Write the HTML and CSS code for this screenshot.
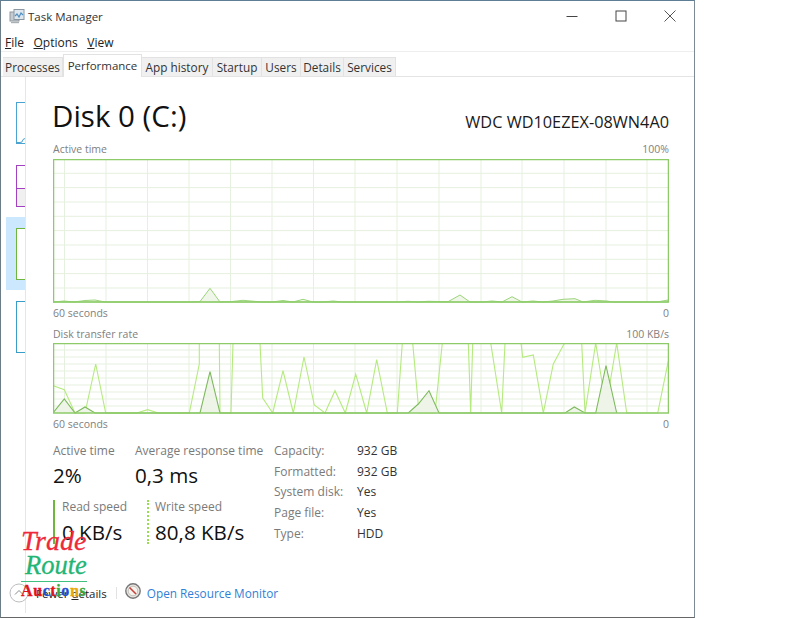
FILE: index.html
```html
<!DOCTYPE html>
<html lang="en">
<head>
<meta charset="utf-8">
<title>Task Manager</title>
<link rel="stylesheet" href="styles.css">
</head>
<body>
<div class="window">
  <header class="titlebar">
    <svg class="app-icon" viewBox="0 0 16 16" width="16" height="16">
      <rect x="1" y="4" width="9" height="9" fill="#c4ccd2" stroke="#8f979d" stroke-width="1"/>
      <rect x="5" y="1.5" width="10" height="10" fill="#dfe7ee" stroke="#8b98a3" stroke-width="1"/>
      <path d="M6 8l2-2 2 3 2-4 2 2" fill="none" stroke="#4f8fc4" stroke-width="1.2"/>
      <path d="M2 14.5h8" stroke="#a9b0b5" stroke-width="1.4"/>
    </svg>
    <span class="app-title">Task Manager</span>
    <div class="win-controls">
      <svg viewBox="0 0 12 12" width="12" height="12"><path d="M0.5 6.5h11" stroke="#444" fill="none"/></svg>
      <svg viewBox="0 0 12 12" width="12" height="12"><rect x="1" y="1" width="10" height="10" stroke="#444" fill="none"/></svg>
      <svg viewBox="0 0 12 12" width="12" height="12"><path d="M0.5 0.5l11 11M11.5 0.5l-11 11" stroke="#555" fill="none"/></svg>
    </div>
  </header>
  <nav class="menubar">
    <span><u>F</u>ile</span><span><u>O</u>ptions</span><span><u>V</u>iew</span>
  </nav>
  <div class="tabs">
    <div class="tab">Processes</div>
    <div class="tab active">Performance</div>
    <div class="tab">App history</div>
    <div class="tab">Startup</div>
    <div class="tab">Users</div>
    <div class="tab">Details</div>
    <div class="tab">Services</div>
  </div>
  <div class="body">
    <aside class="sidebar">
      <div class="side-item"><div class="thumb thumb-blue">
        <svg class="thumb-spark" viewBox="0 0 8 6" width="8" height="6"><path d="M0 5.5H3L5 5L6 2.5L8 1.5" fill="none" stroke="#4aa3d0"/></svg>
      </div></div>
      <div class="side-item"><div class="thumb thumb-purple"></div></div>
      <div class="side-item selected"><div class="thumb thumb-green"></div></div>
      <div class="side-item"><div class="thumb thumb-teal"></div></div>
    </aside>
    <main class="main">
      <div class="head">
        <h1 class="disk-title">Disk 0 (C:)</h1>
        <div class="disk-model">WDC WD10EZEX-08WN4A0</div>
      </div>
      <div class="cap cap-top"><span>Active time</span><span>100%</span></div>
      <svg class="chart chart-a" viewBox="53 159 616 144" width="616" height="144">
        <path class="grid" d="M53 173.3H668M53 187.6H668M53 202H668M53 216.3H668M53 230.6H668M53 245H668M53 259.3H668M53 273.6H668M53 288H668M64.5 159V302M106 159V302M147.5 159V302M189 159V302M230.5 159V302M272 159V302M313.5 159V302M355 159V302M397 159V302M439 159V302M481 159V302M522 159V302M564 159V302M606 159V302M647 159V302"/>
        <path class="area-light" d="M53 302L64 301L74 302L85 300.5L95 300L105 302L190 302L200 301.5L210 288.3L220 302L232 301.5L243 300.3L262 302L272 302L283 300.5L293 302L303 299.3L313 302L323 302L333 301L343 302L398 302L408 301.3L418 302L428 301.3L448 301.7L460 295L470 302L482 302L492 301L502 302L512 296.7L522 302L533 301L543 302L553 301L563 299.3L575 298.7L583 302L595 300.3L607 301L613 302L657 302L668 300V302Z"/>
        <rect class="frame" x="53.5" y="159.5" width="615" height="142.5"/>
      </svg>
      <div class="cap cap-mid"><span>60 seconds</span><span>0</span></div>
      <div class="cap cap-second"><span>Disk transfer rate</span><span>100 KB/s</span></div>
      <svg class="chart chart-b" viewBox="53 344 616 71" width="616" height="71">
        <path class="grid" d="M53 351H668M53 358H668M53 365H668M53 372H668M53 379H668M53 386H668M53 393H668M53 400H668M53 407H668M64.5 344V414M106 344V414M147.5 344V414M189 344V414M230.5 344V414M272 344V414M313.5 344V414M355 344V414M397 344V414M439 344V414M481 344V414M522 344V414M564 344V414M606 344V414M647 344V414"/>
        <polyline class="write" points="53.3,386.7 64.3,390.7 75,414 85,414 95.7,365 105.7,414 136.7,414 147.7,410.7 158.3,414 189.3,414 199.3,365 199.3,344 219.3,344 220,414 231,414 233,344 260,344 262.7,399 272.7,414 283,371.7 293.3,414 304,358 314.3,406 325,414 335,391.7 345.3,414 355.7,375 366.7,414 376.7,360.7 387.3,414 397.3,414 402.3,344 412.7,344 419,414 435,414 442.3,344 468.3,344 470.7,414 472.7,344 490.7,344 501.7,414 505,344 521,344 522.7,358.3 533.3,356 543.3,414 553.3,365 564,345 565,344 581.7,344 585,414 595.7,344 606,408 616.7,344 626.7,414 657.7,414 668.3,362"/>
        <path class="read" d="M53 414L64.3 400L75 414L85 408L95 414H200L210 372.7L220 414H408.3L418.3 405L429 391.7L439 414H565L574.3 408L585 414H595.7L606 366.7L616.7 414"/>
        <rect class="frame frame-b" x="53.5" y="344.5" width="615" height="69.5"/>
      </svg>
      <div class="cap cap-bottom"><span>60 seconds</span><span>0</span></div>
      <section class="stats">
        <div class="stats-left">
          <div class="stat-row">
            <div class="stat stat-active"><div class="label">Active time</div><div class="value">2%</div></div>
            <div class="stat"><div class="label">Average response time</div><div class="value">0,3 ms</div></div>
          </div>
          <div class="stat-row speeds">
            <div class="stat speed speed-read"><div class="label">Read speed</div><div class="value">0 KB/s</div></div>
            <div class="stat speed speed-write"><div class="label">Write speed</div><div class="value">80,8 KB/s</div></div>
          </div>
        </div>
        <dl class="info">
          <dt>Capacity:</dt><dd>932 GB</dd>
          <dt>Formatted:</dt><dd>932 GB</dd>
          <dt>System disk:</dt><dd>Yes</dd>
          <dt>Page file:</dt><dd>Yes</dd>
          <dt>Type:</dt><dd>HDD</dd>
        </dl>
      </section>
    </main>
  </div>
  <footer class="footer">
    <svg class="less" viewBox="0 0 20 20" width="20" height="20">
      <circle cx="10" cy="10" r="9" fill="#fff" stroke="#bdbdbd"/>
      <path d="M6 11.5l4-4 4 4" fill="none" stroke="#8a8a8a"/>
    </svg>
    <span class="fewer">Fewer <u>d</u>etails</span>
    <span class="sep"></span>
    <svg class="gauge" viewBox="0 0 16 16" width="16" height="16">
      <circle cx="8" cy="8" r="7.2" fill="#e9e6e2" stroke="#777" stroke-width="1.4"/>
      <circle cx="8" cy="8" r="4.8" fill="#f6f3ee" stroke="#b7b2ab" stroke-width=".8"/>
      <path d="M4.5 4.5L11 11" stroke="#c8413a" stroke-width="1.6"/>
    </svg>
    <span class="link">Open Resource Monitor</span>
  </footer>
  <div class="watermark">
    <div class="wm-trade">Trade</div>
    <div class="wm-route">Route</div>
    <div class="wm-auctions"><span class="c-r">A</span><span class="c-r">u</span><span class="c-b">c</span><span class="c-r">t</span><span class="c-g">i</span><span class="c-b">o</span><span class="c-y">n</span><span class="c-g">s</span></div>
  </div>
</div>
</body>
</html>
```

FILE: styles.css
```css
* { box-sizing: border-box; }
html, body { margin: 0; padding: 0; background: #fff; }
body { width: 800px; height: 618px; overflow: hidden; font-family: "Open Sans", "Noto Sans", sans-serif; color: #1a1a1a; }

.window {
  position: relative;
  width: 695px;
  height: 618px;
  border: 1px solid #7c8a96;
  border-top-color: #5d7f96;
  border-left-color: #6d7d88;
  border-bottom-color: #666;
  display: flex;
  flex-direction: column;
  background: #fff;
}

.titlebar { height: 32px; display: flex; align-items: center; padding-left: 8px; padding-bottom: 2px; flex: none; }
.app-icon { flex: none; }
.app-title { margin-left: 3px; font-size: 11.5px; color: #333; }
.win-controls { margin-left: auto; display: flex; gap: 37px; padding-right: 18px; }

.menubar { height: 19px; flex: none; display: flex; gap: 9.5px; padding-left: 4px; align-items: center; font-size: 12px; color: #222; border-bottom: 1px solid #eee; }

.tabs { height: 25px; flex: none; display: grid; grid-template-columns: 60px 79px 71px 49px 39px 43px 52px; padding-left: 2px; border-bottom: 1px solid #e4e4e4; align-items: end; }
.tab { height: 19px; background: #f0f0f0; border: 1px solid #e2e2e2; border-bottom: 0; border-left: 0; font-size: 11.8px; line-height: 18px; text-align: center; color: #333; white-space: nowrap; }
.tab.active { height: 23px; background: #fff; font-size: 11.5px; line-height: 21px; margin-bottom: -1px; padding-bottom: 3px; border-left: 1px solid #e2e2e2; }

.body { flex: 1; display: flex; min-height: 0; }
.sidebar { width: 25px; flex: none; border-right: 1px solid #e6e6e6; margin-bottom: 4px; padding-top: 25px; display: flex; flex-direction: column; }
.side-item { height: 42px; margin-bottom: 21px; padding-left: 10px; margin-left: 5px; }
.side-item.selected { height: 73px; padding-top: 11px; margin-bottom: 11px; background: #cce8ff; margin-top: -11px; }
.thumb { height: 100%; border: 1px solid #000; border-right: 0; background: #fff; }
.thumb-blue { border-color: #4aa3d0; display: flex; justify-content: flex-end; align-items: flex-end; }
.thumb-spark { display: block; flex: none; }
.thumb-purple { border-color: #a23fc2; background: linear-gradient(#fff 0 22px, #a23fc2 22px 23px, #f0f0f0 23px); }
.thumb-green { height: 52px; border-color: #6fb63f; }
.thumb-teal { height: 52px; border-color: #3a9dc9; }

.main { flex: 1; padding-left: 27px; padding-right: 25px; min-width: 0; }
.head { display: flex; justify-content: space-between; align-items: flex-end; height: 59px; }
.disk-title { margin: 0 0 1px -1px; font-weight: 400; font-size: 29.5px; line-height: 38px; color: #111; }
.disk-model { font-size: 16.3px; line-height: 20px; color: #1a1a1a; margin-bottom: 4px; }

.cap { display: flex; justify-content: space-between; font-size: 10.5px; line-height: 14px; color: #7f7f7f; }
.cap-top { margin-top: 6px; margin-bottom: 3px; }
.cap-mid { margin-top: 3px; }
.cap-second { margin-top: 7px; margin-bottom: 2px; }
.cap-bottom { margin-top: 3px; }

.chart { display: block; }
.grid { fill: none; stroke: #e6f0df; stroke-width: 1; }
.frame { fill: none; stroke: #8ccb68; stroke-width: 1.5; }
.area-light { fill: #f0f7ea; stroke: #9bd47a; stroke-width: 1; }
.write { fill: none; stroke: #b5ea7e; stroke-width: 1.1; }
.read { fill: #eef5e8; stroke: #7dba5c; stroke-width: 1.1; }

.stats { display: flex; margin-top: 12px; }
.stats-left { width: 221px; flex: none; }
.stat-row { display: flex; }
.stat { flex: none; }
.stat-active { width: 82px; }
.label { font-size: 12px; line-height: 16px; color: #7a7a7a; white-space: nowrap; }
.value { font-size: 20.6px; line-height: 26px; color: #111; margin-top: 3px; white-space: nowrap; }
.speeds { margin-top: 12px; height: 44px; }
.speed { height: 44px; padding-left: 7px; border-left: 2px solid #6fb63f; }
.speed .label { margin-top: -1px; }
.speed .value { margin-top: 4px; }
.speed-read { width: 94px; }
.speed-write { border-left: 2px dotted #9bdc55; padding-left: 6px; }

.info { margin: -3px 0 0; display: grid; grid-template-columns: 83px auto; grid-auto-rows: 20.7px; align-items: center; font-size: 12px; }
.info dt { color: #7a7a7a; white-space: nowrap; }
.info dd { margin: 0; color: #333; }

.footer { position: absolute; left: 8px; top: 575px; height: 34px; display: flex; align-items: center; font-size: 11.5px; }
.less { flex: none; }
.fewer { margin-left: 7px; color: #222; }
.sep { width: 1px; height: 12px; background: #e2e2e2; margin-left: 9px; }
.gauge { margin-left: 8px; margin-top: -4px; flex: none; }
.link { margin-left: 6px; color: #2f7fd6; font-size: 11.8px; }

.watermark { position: absolute; left: 20px; top: 526px; width: 66px; font-family: "Liberation Serif", serif; font-style: italic; pointer-events: none; }
.wm-trade { font-size: 28px; line-height: 27px; color: #ee2a3a; -webkit-text-stroke: 0.3px #ee2a3a; }
.wm-route { font-size: 26.5px; line-height: 23px; color: #22b573; border-bottom: 1px solid #3fc07f; padding-bottom: 4px; padding-left: 4px; -webkit-text-stroke: 0.3px #22b573; }
.wm-auctions { font-size: 16px; line-height: 14px; font-weight: 700; font-style: normal; letter-spacing: 0.6px; margin-top: 2px; white-space: nowrap; -webkit-text-stroke: 0.3px currentColor; }
.c-r { color: #e3121c; }
.c-b { color: #1f4fd0; }
.c-g { color: #3ba83a; }
.c-y { color: #e8a90c; }
```
